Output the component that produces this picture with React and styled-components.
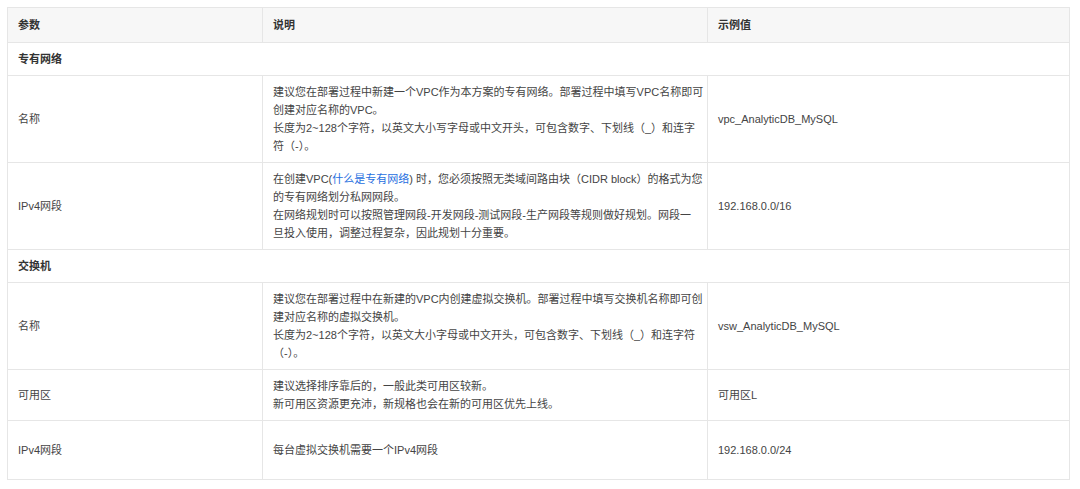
import React from 'react';
import styled, { createGlobalStyle } from 'styled-components';

const GlobalStyle = createGlobalStyle`
  body {
    margin: 0;
    background: #fff;
    font-family: "Liberation Sans", "Noto Sans CJK SC", sans-serif;
  }
`;

const Page = styled.div`
  padding: 7px 0 0 7px;
`;

const Table = styled.table`
  width: 1062px;
  border-collapse: collapse;
  table-layout: fixed;
  font-size: 11px;
  line-height: 18px;
  color: #444;

  td,
  th {
    border: 1px solid #e6e6e6;
    padding: 7px 8px 7px 10px;
    text-align: left;
    vertical-align: middle;
  }
`;

const HeadCell = styled.th`
  background: #f7f7f7;
  font-weight: 700;
  color: #333;
  height: 20px;
`;

const SectionCell = styled.td`
  font-weight: 700;
  color: #333;
`;

const DescCell = styled.td`
  white-space: nowrap;
  overflow: visible;
`;

const Row = styled.tr`
  height: ${(p) => (p.$height ? `${p.$height}px` : 'auto')};
`;

const Link = styled.a`
  color: #1f6fe0;
  text-decoration: none;
`;

const rowsVpc = [
  {
    name: '名称',
    lines: [
      '建议您在部署过程中新建一个VPC作为本方案的专有网络。部署过程中填写VPC名称即可',
      '创建对应名称的VPC。',
      '长度为2~128个字符，以英文大小写字母或中文开头，可包含数字、下划线（_）和连字',
      '符（-）。',
    ],
    value: 'vpc_AnalyticDB_MySQL',
  },
  {
    name: 'IPv4网段',
    lines: [
      <>
        在创建VPC(<Link href="#">什么是专有网络</Link>) 时，您必须按照无类域间路由块（CIDR block）的格式为您
      </>,
      '的专有网络划分私网网段。',
      '在网络规划时可以按照管理网段-开发网段-测试网段-生产网段等规则做好规划。网段一',
      '旦投入使用，调整过程复杂，因此规划十分重要。',
    ],
    value: '192.168.0.0/16',
  },
];

const rowsSwitch = [
  {
    name: '名称',
    lines: [
      '建议您在部署过程中在新建的VPC内创建虚拟交换机。部署过程中填写交换机名称即可创',
      '建对应名称的虚拟交换机。',
      '长度为2~128个字符，以英文大小字母或中文开头，可包含数字、下划线（_）和连字符',
      '（-）。',
    ],
    value: 'vsw_AnalyticDB_MySQL',
  },
  {
    name: '可用区',
    lines: ['建议选择排序靠后的，一般此类可用区较新。', '新可用区资源更充沛，新规格也会在新的可用区优先上线。'],
    value: '可用区L',
  },
  {
    name: 'IPv4网段',
    lines: ['每台虚拟交换机需要一个IPv4网段'],
    value: '192.168.0.0/24',
    height: 59,
  },
];

function Section({ title, rows }) {
  return (
    <>
      <tr>
        <SectionCell colSpan={3}>{title}</SectionCell>
      </tr>
      {rows.map((r, i) => (
        <Row key={i} $height={r.height}>
          <td>{r.name}</td>
          <DescCell>
            {r.lines.map((line, j) => (
              <React.Fragment key={j}>
                {j > 0 && <br />}
                {line}
              </React.Fragment>
            ))}
          </DescCell>
          <td>{r.value}</td>
        </Row>
      ))}
    </>
  );
}

export default function App() {
  return (
    <Page>
      <GlobalStyle />
      <Table>
        <colgroup>
          <col style={{ width: 255 }} />
          <col style={{ width: 445 }} />
          <col style={{ width: 362 }} />
        </colgroup>
        <thead>
          <tr>
            <HeadCell>参数</HeadCell>
            <HeadCell>说明</HeadCell>
            <HeadCell>示例值</HeadCell>
          </tr>
        </thead>
        <tbody>
          <Section title="专有网络" rows={rowsVpc} />
          <Section title="交换机" rows={rowsSwitch} />
        </tbody>
      </Table>
    </Page>
  );
}
